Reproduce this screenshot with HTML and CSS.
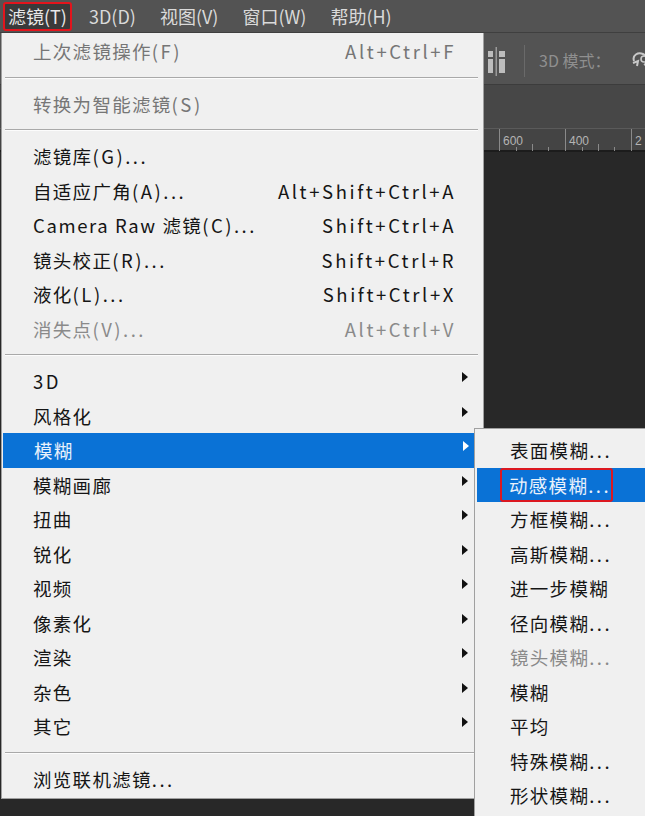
FILE: index.html
```html
<!DOCTYPE html>
<html lang="zh-CN">
<head>
<meta charset="utf-8">
<title>滤镜菜单</title>
<link rel="stylesheet" href="styles.css">
</head>
<body>
<div class="app">
  <header class="menubar">
    <span class="mb-item mb-active">滤镜(T)</span>
    <span class="mb-item">3D(D)</span>
    <span class="mb-item">视图(V)</span>
    <span class="mb-item">窗口(W)</span>
    <span class="mb-item">帮助(H)</span>
  </header>

  <div class="workspace">
    <div class="options">
      <svg class="dist-icon" width="20" height="30" viewBox="0 0 20 30">
        <rect x="1" y="5" width="5" height="6" fill="#bdbdbd"/>
        <rect x="1" y="13" width="5" height="14" fill="#bdbdbd"/>
        <rect x="12" y="5" width="6" height="6" fill="#bdbdbd"/>
        <rect x="12" y="13" width="6" height="14" fill="#bdbdbd"/>
        <rect x="8.5" y="1" width="1.5" height="29" fill="#9a9a9a"/>
      </svg>
      <span class="opt-sep"></span>
      <span class="opt-label">3D 模式：</span>
      <svg class="orbit-icon" width="20" height="30" viewBox="0 0 20 30">
        <path d="M4 16 C2 10 8 7 13 9 C18 11 19 17 14 20" fill="none" stroke="#c8c8c8" stroke-width="2"/>
        <path d="M3 18 L8 16 L7 21" fill="none" stroke="#c8c8c8" stroke-width="2"/>
        <circle cx="14" cy="14" r="3" fill="none" stroke="#c8c8c8" stroke-width="1.6"/>
      </svg>
    </div>
    <div class="tabs"></div>
    <div class="ruler">
      <svg width="645" height="22" viewBox="0 0 645 22">
        <g stroke="#8a8a8a" stroke-width="1">
          <line x1="499.5" y1="0" x2="499.5" y2="22"/>
          <line x1="565.5" y1="0" x2="565.5" y2="22"/>
          <line x1="631.5" y1="0" x2="631.5" y2="22"/>
          <line x1="516.5" y1="18" x2="516.5" y2="22"/>
          <line x1="532.5" y1="15" x2="532.5" y2="22"/>
          <line x1="548.5" y1="18" x2="548.5" y2="22"/>
          <line x1="582.5" y1="18" x2="582.5" y2="22"/>
          <line x1="598.5" y1="15" x2="598.5" y2="22"/>
          <line x1="614.5" y1="18" x2="614.5" y2="22"/>
        </g>
        <g fill="#b4b4b4" font-family="Liberation Sans, Arial, sans-serif" font-size="12">
          <text x="503" y="16">600</text>
          <text x="569" y="16">400</text>
          <text x="635" y="16">2</text>
        </g>
      </svg>
    </div>
    <div class="canvas"></div>
  </div>

  <div class="menu">
    <div class="item disabled"><span>上次滤镜操作<span class="lat">(F)</span></span><span class="key">Alt+Ctrl+F</span></div>
    <div class="sep"></div>
    <div class="item disabled"><span>转换为智能滤镜<span class="lat">(S)</span></span></div>
    <div class="sep"></div>
    <div class="item"><span>滤镜库<span class="lat">(G)...</span></span></div>
    <div class="item"><span>自适应广角<span class="lat">(A)...</span></span><span class="key">Alt+Shift+Ctrl+A</span></div>
    <div class="item"><span><span class="lat lat-s">Camera Raw </span>滤镜<span class="lat">(C)...</span></span><span class="key">Shift+Ctrl+A</span></div>
    <div class="item"><span>镜头校正<span class="lat">(R)...</span></span><span class="key">Shift+Ctrl+R</span></div>
    <div class="item"><span>液化<span class="lat">(L)...</span></span><span class="key">Shift+Ctrl+X</span></div>
    <div class="item disabled light"><span>消失点<span class="lat">(V)...</span></span><span class="key">Alt+Ctrl+V</span></div>
    <div class="sep"></div>
    <div class="item"><span class="lat">3D</span><span class="arrow"></span></div>
    <div class="item"><span>风格化</span><span class="arrow"></span></div>
    <div class="item active"><span>模糊</span><span class="arrow"></span></div>
    <div class="item"><span>模糊画廊</span><span class="arrow"></span></div>
    <div class="item"><span>扭曲</span><span class="arrow"></span></div>
    <div class="item"><span>锐化</span><span class="arrow"></span></div>
    <div class="item"><span>视频</span><span class="arrow"></span></div>
    <div class="item"><span>像素化</span><span class="arrow"></span></div>
    <div class="item"><span>渲染</span><span class="arrow"></span></div>
    <div class="item"><span>杂色</span><span class="arrow"></span></div>
    <div class="item"><span>其它</span><span class="arrow"></span></div>
    <div class="sep"></div>
    <div class="item"><span>浏览联机滤镜<span class="lat">...</span></span></div>
  </div>

  <div class="submenu">
    <div class="sitem"><span>表面模糊<span class="lat">...</span></span></div>
    <div class="sitem active"><span class="mark">动感模糊<span class="lat">...</span></span></div>
    <div class="sitem"><span>方框模糊<span class="lat">...</span></span></div>
    <div class="sitem"><span>高斯模糊<span class="lat">...</span></span></div>
    <div class="sitem"><span>进一步模糊</span></div>
    <div class="sitem"><span>径向模糊<span class="lat">...</span></span></div>
    <div class="sitem disabled"><span>镜头模糊<span class="lat">...</span></span></div>
    <div class="sitem"><span>模糊</span></div>
    <div class="sitem"><span>平均</span></div>
    <div class="sitem"><span>特殊模糊<span class="lat">...</span></span></div>
    <div class="sitem"><span>形状模糊<span class="lat">...</span></span></div>
  </div>
</div>
</body>
</html>
```

FILE: styles.css
```css
* { box-sizing: border-box; }

html, body {
  margin: 0;
  padding: 0;
  width: 645px;
  height: 816px;
  overflow: hidden;
  background: #2a2a2a;
  font-family: "Noto Sans CJK SC", "Microsoft YaHei", sans-serif;
}

.app {
  position: relative;
  width: 645px;
  height: 816px;
  overflow: hidden;
}

/* ---------- top menu bar ---------- */
.menubar {
  height: 33px;
  background: #535353;
  display: flex;
  align-items: center;
  gap: 24px;
  padding-left: 3px;
  border-bottom: 1px solid #3f3f3f;
}

.mb-item {
  font-size: 18px;
  color: #dadada;
  height: 29px;
  display: flex;
  align-items: center;
  white-space: nowrap;
}

.mb-active {
  background: #3a3a3a;
  border: 2.5px solid #e3141c;
  border-radius: 3px;
  padding: 0 3px 0 3px;
  color: #e8e8e8;
  margin-right: -7px;
}

/* ---------- workspace behind the menu ---------- */
.workspace {
  display: flex;
  flex-direction: column;
  height: 783px;
}

.options {
  height: 52px;
  background: #535353;
  display: flex;
  align-items: center;
  padding-left: 487px;
  border-bottom: 1px solid #3c3c3c;
}

.dist-icon { flex: none; margin-top: 4px; }

.opt-sep {
  width: 1px;
  height: 32px;
  background: #3a3a3a;
  border-right: 1px solid #6a6a6a;
  margin: 4px 14px 0 17px;
}

.opt-label {
  font-size: 16px;
  color: #8f8f8f;
  white-space: nowrap;
  margin-top: 2px;
}

.orbit-icon { flex: none; margin-left: 20px; margin-top: 2px; }

.tabs {
  height: 44px;
  background: #474747;
  border-bottom: 1px solid #5a5a5a;
}

.ruler {
  height: 23px;
  background: #444444;
  border-bottom: 2px solid #1c1c1c;
}

.ruler svg { display: block; }

.canvas {
  flex: 1;
  background: #282828;
}

/* ---------- dropdown menu ---------- */
.menu {
  position: absolute;
  left: 1px;
  top: 33px;
  width: 483px;
  height: 766px;
  background: #f0f0f0;
  border: 1px solid #a0a0a0;
  border-top: none;
  padding-top: 1px;
}

.item {
  height: 34.5px;
  display: flex;
  align-items: center;
  justify-content: space-between;
  padding: 0 27px 0 31px;
  font-size: 18.5px;
  color: #151515;
  letter-spacing: 1.3px;
  white-space: nowrap;
}

.lat { letter-spacing: 2.5px; }
.lat-s { letter-spacing: 1.6px; }

.item .key { letter-spacing: 2.6px; }

.item.disabled { color: #767676; }
.item.disabled.light { color: #8a8a8a; }

.item.active {
  background: #0a72d6;
  color: #e9f1fb;
  margin: 0 -1px 0 1px;
}

.arrow {
  width: 0;
  height: 0;
  border-left: 6px solid #111;
  border-top: 5.5px solid transparent;
  border-bottom: 5.5px solid transparent;
  margin-right: -12px;
  margin-top: -8px;
}

.item.active .arrow { border-left-color: #ffffff; }

.sep {
  height: 18px;
  padding-top: 8px;
  margin: 0 5px 0 3px;
}

.sep::before {
  content: "";
  display: block;
  height: 1px;
  background: #a9a9a9;
  border-bottom: 1px solid #fcfcfc;
  box-sizing: content-box;
}

/* ---------- submenu ---------- */
.submenu {
  position: absolute;
  left: 474px;
  top: 428px;
  width: 190px;
  height: 400px;
  background: #f0f0f0;
  border: 1px solid #a0a0a0;
  padding-top: 4px;
}

.sitem {
  height: 34.5px;
  display: flex;
  align-items: center;
  padding-left: 33px;
  margin-left: 2px;
  font-size: 18.5px;
  color: #151515;
  letter-spacing: 1.3px;
  white-space: nowrap;
}

.sitem.disabled { color: #8a8a8a; }

.sitem.active {
  background: #0a72d6;
  color: #e9f1fb;
}

.mark {
  border: 2.5px solid #dc1820;
  border-radius: 3px;
  padding: 2px 0 2px 7px;
  margin-left: -10px;
}
```
